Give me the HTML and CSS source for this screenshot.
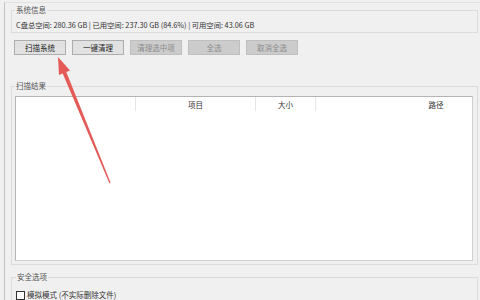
FILE: index.html
```html
<!DOCTYPE html>
<html>
<head>
<meta charset="utf-8">
<link rel="stylesheet" href="styles.css">
</head>
<body>
<div class="window">
  <fieldset class="group g-info">
    <legend>系统信息</legend>
    <div class="info">C盘总空间: 280.36 GB | 已用空间: 237.30 GB (84.6%) | 可用空间: 43.06 GB</div>
  </fieldset>
  <div class="buttons">
    <div class="btn">扫描系统</div>
    <div class="btn">一键清理</div>
    <div class="btn disabled">清理选中项</div>
    <div class="btn disabled">全选</div>
    <div class="btn disabled">取消全选</div>
  </div>
  <fieldset class="group g-result">
    <legend>扫描结果</legend>
    <div class="list">
      <div class="header">
        <div class="col c1"></div>
        <div class="col c2">项目</div>
        <div class="col c3">大小</div>
        <div class="col c4">路径</div>
      </div>
    </div>
  </fieldset>
  <fieldset class="group g-safe">
    <legend>安全选项</legend>
    <label class="check"><span class="box"></span><span>模拟模式 (不实际删除文件)</span></label>
  </fieldset>
</div>
<svg class="arrow" width="480" height="300" viewBox="0 0 480 300">
  <polygon points="58,57 70,70.4 66.3,71.9 110.6,182.8 109.4,183.2 62.7,73.5 59,75" fill="#e35a56"/>
</svg>
</body>
</html>
```
FILE: styles.css
```css
html, body {
  margin: 0;
  padding: 0;
}
body {
  width: 480px;
  height: 300px;
  overflow: hidden;
  background: #f0f0f0;
  font-family: "Noto Sans CJK SC", "Noto Sans", sans-serif;
  font-size: 8px;
  color: #333;
  position: relative;
}
.window {
  margin: 2px 0 0 4px;
  border-top: 1px solid #e2e2e2;
  border-left: 1px solid #c4c4c4;
  padding: 2px 2px 0 6px;
  height: 298px;
  box-sizing: border-box;
  overflow: hidden;
}
.group {
  margin: 0;
  border: 1px solid #dcdcdc;
  padding: 0 3px;
  min-width: 0;
}
.group legend {
  padding: 0 1px;
  line-height: 10px;
  height: 10px;
  font-size: 7.5px;
  color: #555;
}
.g-info {
  padding-top: 5px;
  padding-bottom: 2px;
}
.info {
  line-height: 10px;
  height: 10px;
  padding-left: 1px;
  white-space: nowrap;
  color: #333;
  font-size: 7.3px;
}
.buttons {
  display: flex;
  gap: 6px;
  margin: 7px 0 0 3px;
}
.btn {
  width: 52px;
  height: 15px;
  box-sizing: border-box;
  border: 1px solid #adadad;
  background: #e1e1e1;
  display: flex;
  align-items: center;
  justify-content: center;
  color: #222;
  font-size: 7.5px;
}
.btn.disabled {
  background: #cccccc;
  border-color: #bfbfbf;
  color: #8a8a8a;
}
.g-result {
  margin-top: 26px;
  padding-top: 5px;
  padding-bottom: 3px;
  padding-right: 4px;
}
.list {
  height: 165px;
  box-sizing: border-box;
  background: #fff;
  border: 1px solid #b4b4b4;
  border-bottom-color: #d0d0d0;
  border-right-color: #d0d0d0;
  overflow: hidden;
}
.header {
  display: flex;
  height: 14px;
}
.col {
  flex: none;
  display: flex;
  align-items: center;
  justify-content: center;
  border-right: 1px solid #e6e6e6;
  box-sizing: border-box;
  font-size: 7.5px;
  color: #333;
}
.c1 { width: 120px; }
.c2 { width: 120px; }
.c3 { width: 60px; }
.c4 { width: 240px; border-right: none; }
.g-safe {
  margin-top: 7px;
  padding-top: 8px;
  padding-left: 4px;
  height: 30px;
}
.check {
  display: flex;
  align-items: center;
  gap: 2px;
  line-height: 10px;
  color: #333;
  font-size: 7.5px;
}
.box {
  width: 9px;
  height: 9px;
  box-sizing: border-box;
  border: 1px solid #333;
  background: #fff;
}
.arrow {
  position: absolute;
  left: 0;
  top: 0;
  pointer-events: none;
}
```
